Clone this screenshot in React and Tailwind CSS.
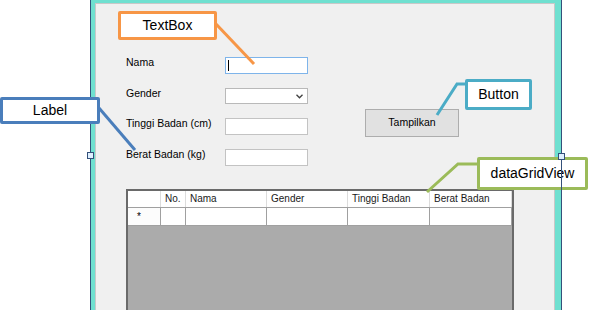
import React from 'react';

const FONT = { fontFamily: '"Liberation Sans", Arial, sans-serif' };

const FIELDS = [
  { label: 'Nama', kind: 'focus' },
  { label: 'Gender', kind: 'combo' },
  { label: 'Tinggi Badan (cm)', kind: 'text' },
  { label: 'Berat Badan (kg)', kind: 'text' },
];

const COLUMNS = [
  { title: '', w: 'w-[33px]' },
  { title: 'No.', w: 'w-[25px]' },
  { title: 'Nama', w: 'w-[81px]' },
  { title: 'Gender', w: 'w-[81px]' },
  { title: 'Tinggi Badan', w: 'w-[82px]' },
  { title: 'Berat Badan', w: 'w-[82px]' },
];

function Field({ kind }) {
  if (kind === 'combo') {
    return (
      <div className="flex h-[16px] w-[83px] items-center justify-end border border-[#b9b9b9] bg-white pr-[4px]">
        <svg width="7" height="5" viewBox="0 0 7 5">
          <path d="M0.5 0.8 L3.5 3.8 L6.5 0.8" fill="none" stroke="#404040" strokeWidth="1.3" />
        </svg>
      </div>
    );
  }
  if (kind === 'focus') {
    return (
      <div className="flex h-[17px] w-[83px] items-center border border-[#7eb4ea] bg-white pl-[2px]">
        <span className="h-[11px] w-px bg-black" />
      </div>
    );
  }
  return <div className="h-[17px] w-[83px] border border-[#c3c3c3] bg-white" />;
}

function Callout({ text, className }) {
  return (
    <div
      className={`absolute flex items-center justify-center rounded-[2px] border-[3px] bg-white text-[14px] text-black ${className}`}
      style={FONT}
    >
      {text}
    </div>
  );
}

export default function App() {
  return (
    <div className="relative h-[310px] w-[589px] overflow-hidden bg-white" style={FONT}>
      {/* form window in designer */}
      <div className="ml-[90px] flex h-[310px] w-[472px] flex-col border-x border-[#34507a] bg-[#6fe0d0] pl-[4px] pr-[6px] pt-[3px]">
        <div className="flex-1 border-l border-r border-t border-[#c8c8c8] bg-[#f0f0f0] pl-[30px] pt-[53px]">
          <div className="flex">
            <div className="flex flex-col">
              {FIELDS.map((f, i) => (
                <div key={f.label} className={`flex items-start ${i === 0 ? '' : 'mt-[14px]'}`}>
                  <span className="-mt-[1px] w-[99px] text-[10.5px] leading-[12px] text-black">{f.label}</span>
                  <Field kind={f.kind} />
                </div>
              ))}
            </div>
            <div className="ml-[57px] pt-[52px]">
              <button
                type="button"
                className="flex h-[28px] w-[94px] items-center justify-center border border-[#adadad] bg-[#e1e1e1] text-[10.5px] text-black"
              >
                Tampilkan
              </button>
            </div>
          </div>

          {/* dataGridView */}
          <div className="mt-[23px] h-[200px] w-[388px] border-2 border-[#6a6a6a] bg-[#ababab]">
            <div className="flex h-[17px] border-b border-[#a0a0a0] bg-white">
              {COLUMNS.map((c) => (
                <div
                  key={c.title || 'corner'}
                  className={`${c.w} flex items-center border-r border-[#dcdcdc] pl-[4px] text-[10px] leading-none text-[#1a1a1a]`}
                >
                  {c.title}
                </div>
              ))}
            </div>
            <div className="flex h-[18px] border-b border-[#a0a0a0] bg-white">
              {COLUMNS.map((c, i) => (
                <div
                  key={'r' + i}
                  className={`${c.w} flex items-center border-r border-[#a0a0a0] ${i === 0 ? 'justify-center bg-[#fcfcfc] pr-[10px]' : ''}`}
                >
                  {i === 0 && <span className="text-[10px] leading-none text-black">*</span>}
                </div>
              ))}
            </div>
          </div>
        </div>
      </div>

      {/* callout leader lines */}
      <svg className="absolute left-0 top-0" width="589" height="310">
        <path d="M216 24 L254 64" stroke="#f79646" strokeWidth="3" fill="none" />
        <path d="M99 108 L135 150" stroke="#4a7ebb" strokeWidth="3" fill="none" />
        <path d="M465 84 L457 84 L437 115" stroke="#4bacc6" strokeWidth="3" fill="none" />
        <path d="M477 164 L458 164 L427 192" stroke="#9bbb59" strokeWidth="3" fill="none" />
      </svg>

      <Callout text="TextBox" className="left-[118px] top-[11px] h-[29px] w-[99px] border-[#f79646]" />
      <Callout text="Label" className="left-0 top-[97px] h-[27px] w-[100px] border-[#4a7ebb]" />
      <Callout text="Button" className="left-[465px] top-[79px] h-[31px] w-[67px] border-[#4bacc6]" />
      <Callout text="dataGridView" className="left-[477px] top-[157px] h-[33px] w-[111px] border-[#9bbb59]" />

      {/* designer selection line over callout */}
      <div className="absolute left-[561px] top-[157px] h-[33px] w-px bg-[#34507a]" />

      {/* resize handles */}
      <div className="absolute left-[87px] top-[152px] h-[7px] w-[7px] border border-[#34507a] bg-[#dff0ff]" />
      <div className="absolute left-[558px] top-[153px] h-[7px] w-[7px] border border-[#34507a] bg-[#dff0ff]" />
    </div>
  );
}
